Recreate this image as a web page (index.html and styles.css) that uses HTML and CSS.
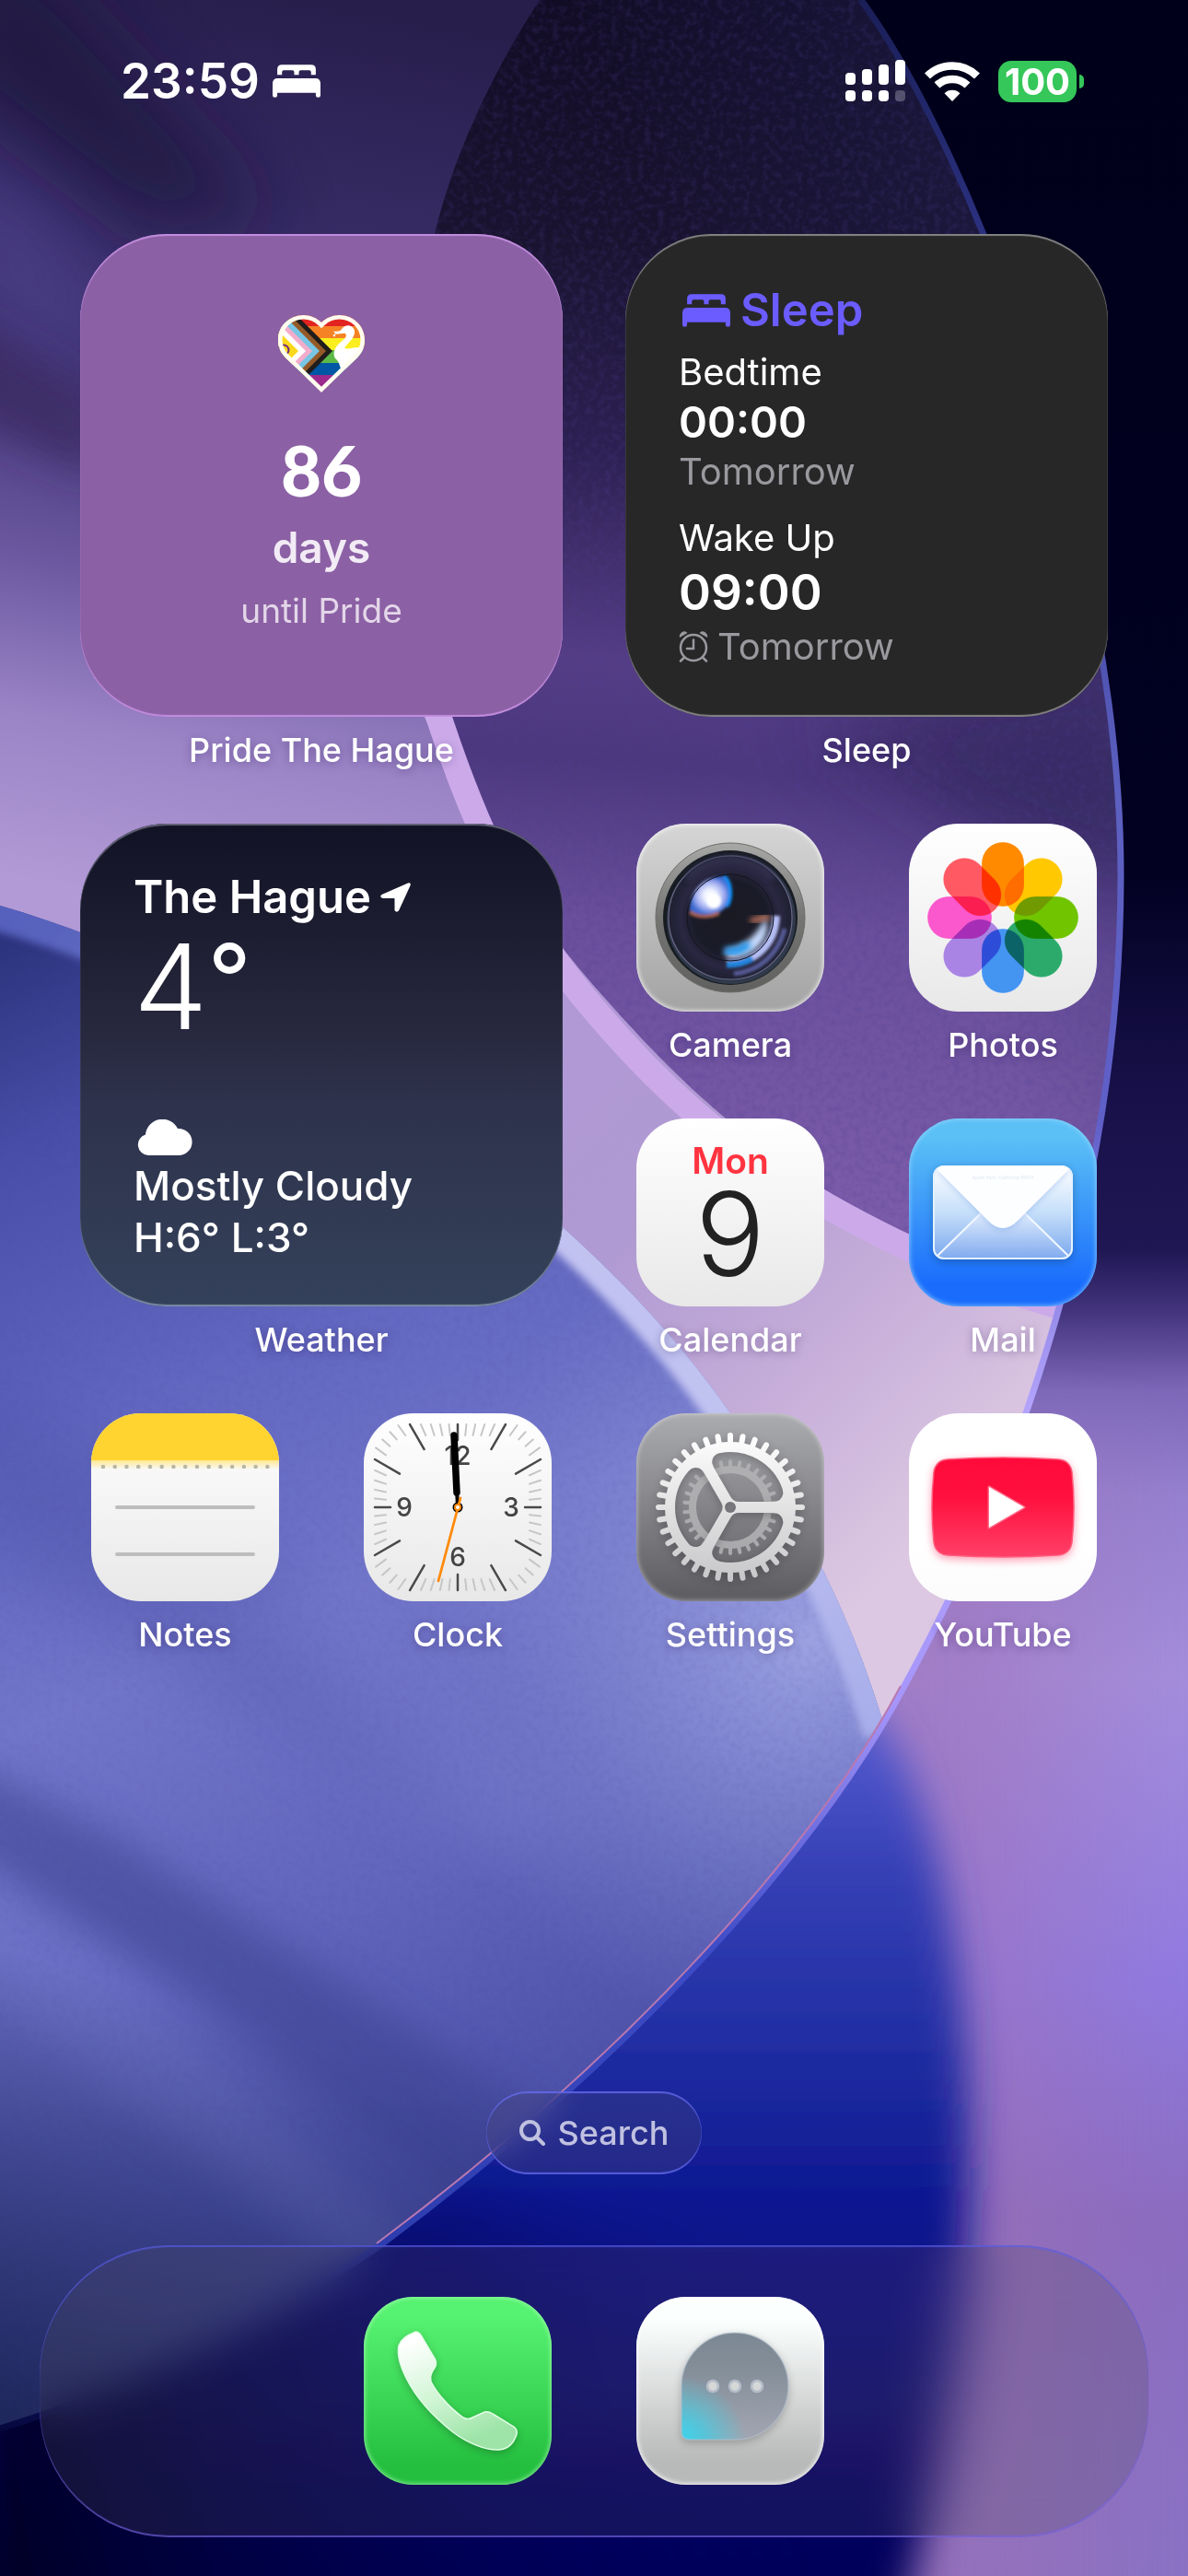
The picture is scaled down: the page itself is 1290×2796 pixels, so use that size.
FILE: index.html
```html
<!DOCTYPE html>
<html lang="en">
<head>
    <meta charset="UTF-8">
    <meta name="viewport" content="width=device-width, initial-scale=1.0">
    <title>Home Screen</title>
    <link rel="stylesheet" href="styles.css">
</head>
<body>
    <!-- Wallpaper -->
    <svg class="wallpaper" viewBox="0 0 1290 2796" preserveAspectRatio="xMidYMid slice" aria-hidden="true">
        <defs>
            <linearGradient id="right" x1="0" y1="0" x2="0" y2="1">
                <stop offset="0" stop-color="#00001a"/>
                <stop offset=".34" stop-color="#020122"/>
                <stop offset=".42" stop-color="#171048"/>
                <stop offset=".485" stop-color="#1f1753"/>
                <stop offset=".51" stop-color="#45357f"/>
                <stop offset=".54" stop-color="#7d68b8"/>
                <stop offset=".58" stop-color="#9580cf"/>
                <stop offset=".65" stop-color="#a48edc"/>
                <stop offset=".77" stop-color="#8f7ae0"/>
                <stop offset=".86" stop-color="#8a6cc0"/>
                <stop offset="1" stop-color="#8a72c4"/>
            </linearGradient>
            <linearGradient id="pinkish" x1="0" y1="0" x2="1" y2="0">
                <stop offset=".6" stop-color="#a070b4" stop-opacity=".9"/>
                <stop offset="1" stop-color="#a070b4" stop-opacity="0"/>
            </linearGradient>
            <linearGradient id="deep" gradientUnits="userSpaceOnUse" x1="0" y1="1840" x2="0" y2="2796">
                <stop offset="0" stop-color="#5a60d4"/>
                <stop offset=".2" stop-color="#3640b6"/>
                <stop offset=".42" stop-color="#1e2ba0"/>
                <stop offset=".62" stop-color="#08128c"/>
                <stop offset=".8" stop-color="#0b0872"/>
                <stop offset="1" stop-color="#000058"/>
            </linearGradient>
            <linearGradient id="corner" gradientUnits="userSpaceOnUse" x1="0" y1="2700" x2="800" y2="2500">
                <stop offset="0" stop-color="#020028"/>
                <stop offset="1" stop-color="#0c1468" stop-opacity="0"/>
            </linearGradient>
            <linearGradient id="fan" gradientUnits="userSpaceOnUse" x1="330" y1="0" x2="160" y2="980">
                <stop offset="0" stop-color="#281e4c"/>
                <stop offset=".22" stop-color="#352a62"/>
                <stop offset=".45" stop-color="#44377a"/>
                <stop offset=".65" stop-color="#6b58a0"/>
                <stop offset=".82" stop-color="#9b84c6"/>
                <stop offset="1" stop-color="#b29ad6"/>
            </linearGradient>
            <linearGradient id="mauve" gradientUnits="userSpaceOnUse" x1="500" y1="1000" x2="1080" y2="1600">
                <stop offset="0" stop-color="#b098d8"/>
                <stop offset=".45" stop-color="#b09ad2"/>
                <stop offset=".75" stop-color="#c8b0da"/>
                <stop offset="1" stop-color="#dcc8e2"/>
            </linearGradient>
            <linearGradient id="stone" gradientUnits="userSpaceOnUse" x1="900" y1="0" x2="800" y2="1400">
                <stop offset="0" stop-color="#110c24"/>
                <stop offset=".2" stop-color="#19132f"/>
                <stop offset=".36" stop-color="#2c2052"/>
                <stop offset=".52" stop-color="#553d86"/>
                <stop offset=".6" stop-color="#4c387e"/>
                <stop offset=".72" stop-color="#6a4f9c"/>
                <stop offset="1" stop-color="#8060ae"/>
            </linearGradient>
            <linearGradient id="stoneSide" gradientUnits="userSpaceOnUse" x1="740" y1="300" x2="1220" y2="100">
                <stop offset="0" stop-color="#23255c" stop-opacity="0"/>
                <stop offset="1" stop-color="#23255c" stop-opacity=".5"/>
            </linearGradient>
            <linearGradient id="blue" gradientUnits="userSpaceOnUse" x1="60" y1="1000" x2="660" y2="2400">
                <stop offset="0" stop-color="#2c347e"/>
                <stop offset=".14" stop-color="#484fa8"/>
                <stop offset=".34" stop-color="#6267c0"/>
                <stop offset=".52" stop-color="#7276ca"/>
                <stop offset=".72" stop-color="#6266bc"/>
                <stop offset="1" stop-color="#4449a0"/>
            </linearGradient>
            <radialGradient id="glow" gradientUnits="userSpaceOnUse" cx="880" cy="1780" r="440">
                <stop offset="0" stop-color="#a6ace8" stop-opacity=".85"/>
                <stop offset="1" stop-color="#8088d4" stop-opacity="0"/>
            </radialGradient>
            <linearGradient id="shade" gradientUnits="userSpaceOnUse" x1="210" y1="2180" x2="60" y2="2640">
                <stop offset="0" stop-color="#1d2760" stop-opacity="0"/>
                <stop offset="1" stop-color="#1d2658" stop-opacity=".95"/>
            </linearGradient>
            <linearGradient id="rim" gradientUnits="userSpaceOnUse" x1="0" y1="0" x2="0" y2="2640">
                <stop offset="0" stop-color="#1a1f58"/>
                <stop offset=".15" stop-color="#343a94"/>
                <stop offset=".33" stop-color="#5c60c0"/>
                <stop offset=".46" stop-color="#5f5fc8"/>
                <stop offset=".58" stop-color="#b4a4fc"/>
                <stop offset=".7" stop-color="#a696fa"/>
                <stop offset=".8" stop-color="#3f4cc8"/>
                <stop offset=".93" stop-color="#2c3cac"/>
                <stop offset="1" stop-color="#05063c"/>
            </linearGradient>
            <linearGradient id="bend" gradientUnits="userSpaceOnUse" x1="0" y1="980" x2="960" y2="1860">
                <stop offset="0" stop-color="#5560bc"/>
                <stop offset=".2" stop-color="#6670c4"/>
                <stop offset=".5" stop-color="#c2c2f2"/>
                <stop offset=".75" stop-color="#c0c2f0"/>
                <stop offset="1" stop-color="#a8aeea"/>
            </linearGradient>
            <filter id="soft" x="-20%" y="-20%" width="140%" height="140%"><feGaussianBlur stdDeviation="22"/></filter>
            <filter id="softer" x="-50%" y="-50%" width="200%" height="200%"><feGaussianBlur stdDeviation="40"/></filter>
            <filter id="edge"><feGaussianBlur stdDeviation="4"/></filter>
            <filter id="grain" x="0" y="0" width="100%" height="100%">
                <feTurbulence type="fractalNoise" baseFrequency=".14" numOctaves="3" seed="4"/>
                <feColorMatrix values="0 0 0 0 .08  0 0 0 0 .05  0 0 0 0 .3  0 0 0 1.4 -.58"/>
            </filter>
            <clipPath id="sheet">
                <path d="M0 0H935C1060 170 1217 600 1217 950C1217 1250 1130 1560 982 1830C898 1988 710 2215 413 2437C300 2515 150 2590 0 2636Z"/>
            </clipPath>
            <clipPath id="stoneClip">
                <path d="M586 0C540 70 495 160 473 250C450 340 440 440 445 530C450 640 466 730 488 778C540 940 590 1010 660 1087C760 1200 850 1275 987 1342C1060 1380 1110 1400 1220 1425V0Z"/>
            </clipPath>
            <clipPath id="blueClip">
                <path d="M0 983C200 1040 440 1180 611 1332C720 1430 780 1510 830 1590C890 1690 930 1770 962 1880V2700H0Z"/>
            </clipPath>
        </defs>
        <rect width="1290" height="2796" fill="url(#right)"/>
        <rect x="640" y="1560" width="650" height="1350" fill="url(#pinkish)" filter="url(#softer)" opacity=".6"/>
        <path d="M800 1760L936 1850C995 1900 1030 2030 1046 2200C1070 2450 1030 2650 978 2850H-60V2300Z" fill="url(#deep)" filter="url(#soft)"/>
        <path d="M-20 2560L500 2380L900 2450V2850H-20Z" fill="url(#corner)" filter="url(#soft)"/>
        <g clip-path="url(#sheet)">
            <rect width="1290" height="2796" fill="url(#mauve)"/>
            <path d="M0 0H640V800L560 1150L0 1050Z" fill="url(#fan)"/>
            <path d="M-60 140L60 230L120 330L60 420L-60 300Z" fill="#4b4088" opacity=".7" filter="url(#softer)"/>
            <path d="M-60 -60L40 -40L300 240L160 250L-60 80Z" fill="#1f163c" opacity=".75" filter="url(#softer)"/>
            <path d="M-60 330L110 430V520L-60 440Z" fill="#3b2b62" opacity=".8" filter="url(#soft)"/>
            <g clip-path="url(#stoneClip)">
                <rect width="1290" height="1430" fill="url(#stone)"/>
                <rect width="1290" height="1430" fill="url(#stoneSide)"/>
                <path d="M880 780L1260 700V980L1060 900Z" fill="#32255c" opacity=".65" filter="url(#softer)"/>
                <rect x="440" width="790" height="1430" filter="url(#grain)" opacity=".4"/>
            </g>
            <path d="M456 700C462 740 470 765 477 780C530 940 580 1020 647 1098C752 1222 850 1290 987 1355C1060 1390 1110 1408 1200 1432" fill="none" stroke="#ccaaea" stroke-width="28"/>
            <g clip-path="url(#blueClip)">
                <rect width="1290" height="2700" fill="url(#blue)"/>
                <path d="M-60 1900L120 1990L640 2330L560 2440L200 2160L-60 2000Z" fill="#373c8c" opacity=".5" filter="url(#soft)"/>
                <path d="M-60 2000L120 2130L480 2470L420 2500L160 2300L-60 2130Z" fill="#787dd0" opacity=".35" filter="url(#soft)"/>
                <path d="M-60 1480L240 1640L560 2000L300 1860L-60 1660Z" fill="#454ba0" opacity=".35" filter="url(#softer)"/>
                <path d="M200 1700L420 1760L640 2000L480 2000Z" fill="#8488d8" opacity=".3" filter="url(#softer)"/>
                <rect width="1290" height="2700" fill="url(#glow)"/>
                <rect width="1290" height="2700" fill="url(#shade)"/>
                <rect y="980" width="1000" height="1700" filter="url(#grain)" opacity=".14"/>
                <path d="M-10 983C200 1040 440 1180 611 1332C720 1430 780 1510 830 1590C890 1690 930 1770 962 1880" fill="none" stroke="url(#bend)" stroke-width="50" filter="url(#edge)"/>
            </g>
        </g>
        <path d="M935 0C1060 170 1217 600 1217 950C1217 1250 1130 1560 982 1830C898 1988 710 2215 413 2437C300 2515 150 2590 0 2636" fill="none" stroke="url(#rim)" stroke-width="7"/>
        <path d="M978 1830C894 1988 706 2213 409 2435" fill="none" stroke="#b878b0" stroke-width="2"/>
    </svg>

    <header class="status-bar">
        <div class="status-left">
            <time class="clock-time">23:59</time>
            <svg class="bed-icon" viewBox="0 0 51 35" aria-hidden="true">
                <path d="M5 11V5q0-5 5-5H41q5 0 5 5V11H41V8q0-2-2-2H30q-2 0-2 2v3h-5v-3q0-2-2-2H12q-2 0-2 2v3ZM0 20q0-5.500 5.500-5.500H45.500q5.500 0 5.500 5.500V33q0 2-2.500 2t-2.500-2V30H5V33q0 2-2.500 2T0 33Z"/>
            </svg>
        </div>
        <div class="status-right">
            <svg class="signal" viewBox="0 0 66 46" aria-hidden="true">
                <g fill="#fff">
                    <rect x="0" y="14" width="11" height="13" rx="4"/>
                    <rect x="18" y="10" width="11" height="17" rx="4"/>
                    <rect x="36" y="5" width="11" height="22" rx="4"/>
                    <rect x="54" y="0" width="11" height="27" rx="4"/>
                    <rect x="0" y="33" width="11" height="12" rx="4"/>
                    <rect x="18" y="33" width="11" height="12" rx="4"/>
                    <rect x="36" y="33" width="11" height="12" rx="4"/>
                    <rect x="54" y="33" width="11" height="12" rx="4" opacity=".25"/>
                </g>
            </svg>
            <svg class="wifi" viewBox="0 0 60 43" aria-hidden="true">
                <g fill="none" stroke="#fff" stroke-width="8.500">
                    <path d="M3 15.500A38.500 38.500 0 0 1 57 15.500"/>
                    <path d="M13.500 25.500A24 24 0 0 1 46.500 25.500"/>
                </g>
                <path d="M30 43L21.500 34.200A12.500 12.500 0 0 1 38.500 34.200Z" fill="#fff"/>
            </svg>
            <div class="battery">100</div>
        </div>
    </header>

    <main class="home">
        <section class="widget-cell">
            <div class="widget pride">
                <svg class="heart" viewBox="0 0 94 84" aria-hidden="true">
                    <defs>
                        <clipPath id="heartClip"><path d="M47 8C42 3 35 0 27.500 0C12 0 0 12 0 27C0 36 4 43 11 49L47 84L83 49C90 43 94 36 94 27C94 12 82 0 66.500 0C59 0 52 3 47 8Z"/></clipPath>
                    </defs>
                    <g clip-path="url(#heartClip)">
                        <rect width="94" height="13" fill="#e22420"/>
                        <rect y="12" width="94" height="13" fill="#f58224"/>
                        <rect y="25" width="94" height="13" fill="#fbee1f"/>
                        <rect y="38" width="94" height="14" fill="#5db947"/>
                        <rect y="52" width="94" height="13" fill="#0057a5"/>
                        <rect y="65" width="94" height="20" fill="#9c2a8c"/>
                        <path d="M-1-21L59 39L-1 99Z" fill="#201d1c"/>
                        <path d="M-8-21L52 39L-8 99Z" fill="#945a28"/>
                        <path d="M-15-21L45 39L-15 99Z" fill="#78c5e4"/>
                        <path d="M-23-21L37 39L-23 99Z" fill="#f3adcb"/>
                        <path d="M-30-21L30 39L-30 99Z" fill="#fff"/>
                        <path d="M-38-21L22 39L-38 99Z" fill="#fbd81c"/>
                        <circle cx="6" cy="38" r="5.500" fill="none" stroke="#6a2a80" stroke-width="2"/>
                        <path d="M60 17.500C64 18 68 18 70 14C74 9 82 11 83 17C84 25 76 29 72 36C79 38 82 33 94 36V50L70 60C66 57 68 52 62 47C59 42 61 36 66 31C71 27 76 23 73 20C70 19 66 21 62 20.500C63 24 60 24 59.500 22L62 20Z" fill="#fff"/>
                        <path d="M47 8C42 3 35 0 27.500 0C12 0 0 12 0 27C0 36 4 43 11 49L47 84L83 49C90 43 94 36 94 27C94 12 82 0 66.500 0C59 0 52 3 47 8Z" fill="none" stroke="#fffdf0" stroke-width="9"/>
                    </g>
                </svg>
                <p class="pride-count">86</p>
                <p class="pride-unit">days</p>
                <p class="pride-note">until Pride</p>
            </div>
            <span class="label">Pride The Hague</span>
        </section>

        <section class="widget-cell">
            <div class="widget sleep">
                <h2 class="sleep-title">
                    <svg class="bed-icon" viewBox="0 0 51 35" aria-hidden="true">
                        <path d="M5 11V5q0-5 5-5H41q5 0 5 5V11H41V8q0-2-2-2H30q-2 0-2 2v3h-5v-3q0-2-2-2H12q-2 0-2 2v3ZM0 20q0-5.500 5.500-5.500H45.500q5.500 0 5.500 5.500V33q0 2-2.500 2t-2.500-2V30H5V33q0 2-2.500 2T0 33Z"/>
                    </svg>
                    Sleep
                </h2>
                <p class="sleep-name">Bedtime</p>
                <p class="sleep-time">00:00</p>
                <p class="sleep-day">Tomorrow</p>
                <p class="sleep-name wake">Wake Up</p>
                <p class="sleep-time big">09:00</p>
                <p class="sleep-day">
                    <svg class="alarm" viewBox="0 0 32 34" aria-hidden="true">
                        <g fill="none" stroke="currentColor" stroke-width="2.500" stroke-linecap="round">
                            <circle cx="16" cy="18" r="14"/>
                            <path d="M16 9.500V19H9M5.500 29L2 32.500M26.500 29L30 32.500"/>
                        </g>
                        <path d="M1 7Q0 4 3 1.500Q7-1 9.500 2ZM31 7Q32 4 29 1.500Q25-1 22.500 2Z" fill="currentColor"/>
                    </svg>
                    Tomorrow
                </p>
            </div>
            <span class="label">Sleep</span>
        </section>

        <section class="widget-cell">
            <div class="widget weather">
                <h2 class="weather-city">
                    The Hague
                    <svg class="arrow" viewBox="0 0 33 32" aria-hidden="true"><path d="M30 .4Q33.500-.6 32.600 3L20 30.500Q17.500 33 15.500 30V17.500Q15.500 17 15 17H2.500Q-1.500 15.500 1.500 13Z"/></svg>
                </h2>
                <p class="weather-temp">4<span class="degree">°</span></p>
                <svg class="cloud" viewBox="0 0 60 39" aria-hidden="true"><path d="M12 39A11.500 11.500 0 0 1 9 16.500A18.500 18.500 0 0 1 44 10A14.500 14.500 0 0 1 46 39Z"/></svg>
                <p class="weather-text">Mostly Cloudy</p>
                <p class="weather-text">H:6° L:3°</p>
            </div>
            <span class="label">Weather</span>
        </section>

        <a class="app" href="#camera">
            <svg class="icon camera" viewBox="0 0 204 204" aria-hidden="true">
                <defs>
                    <linearGradient id="lensRing" x1="0" y1="0" x2="0" y2="1"><stop offset="0" stop-color="#a8a8a6"/><stop offset=".5" stop-color="#757573"/><stop offset="1" stop-color="#60605f"/></linearGradient>
                    <radialGradient id="lens" cx=".5" cy=".5" r=".5"><stop offset="0" stop-color="#191a22"/><stop offset=".6" stop-color="#1a1b28"/><stop offset=".8" stop-color="#2a2742"/><stop offset="1" stop-color="#1e2030"/></radialGradient>
                    <radialGradient id="spark"><stop offset="0" stop-color="#fff"/><stop offset=".3" stop-color="#eef2ff"/><stop offset=".7" stop-color="#a0acf0"/><stop offset="1" stop-color="#3c6ad0"/></radialGradient>
                    <filter id="b3" x="-40%" y="-40%" width="180%" height="180%"><feGaussianBlur stdDeviation="3"/></filter>
                    <filter id="b2" x="-40%" y="-40%" width="180%" height="180%"><feGaussianBlur stdDeviation="1.500"/></filter>
                </defs>
                <circle cx="102" cy="102" r="81" fill="url(#lensRing)" stroke="#6b6b69" stroke-width="1"/>
                <circle cx="102" cy="102" r="73" fill="#171c22"/>
                <circle cx="103" cy="104" r="70" fill="#30394a"/>
                <circle cx="102" cy="102" r="67" fill="url(#lens)" stroke="#6a6888" stroke-width="1.200"/>
                <g filter="url(#b2)">
                    <path d="M58 94C58 72 72 57 96 57C103 66 104 82 98 90C90 100 70 102 58 94Z" fill="url(#spark)"/>
                    <path d="M95 57C104 64 104 82 98 90" fill="none" stroke="#0c8cf4" stroke-width="4"/>
                    <path d="M58 96C66 102 80 102 90 97" fill="none" stroke="#a8604c" stroke-width="4"/>
                </g>
                <path d="M97 136C118 134 134 118 140 101C149 124 128 148 98 146Z" fill="#c8dcff" filter="url(#b3)"/>
                <path d="M96 138C106 140 116 137 122 130" stroke="#1890ea" stroke-width="8" fill="none" filter="url(#b3)"/>
                <path d="M124 106C132 104 138 101 145 101" stroke="#c87860" stroke-width="6" fill="none" filter="url(#b3)"/>
                <g fill="none" filter="url(#b2)">
                    <path d="M98 152C130 152 151 130 152 100" stroke="#b4bef4" stroke-width="8"/>
                    <path d="M98 153C108 153 118 151 126 146" stroke="#2484dc" stroke-width="7"/>
                    <path d="M106 163C134 160 154 142 161 114" stroke="#565c98" stroke-width="5"/>
                </g>
                <circle cx="84" cy="84" r="8" fill="#fff" filter="url(#b2)"/>
                <circle cx="102" cy="102" r="47" fill="none" stroke="#14141f" stroke-width="1"/>
                <path d="M55 60A63 63 0 0 1 149 60" fill="none" stroke="#393656" stroke-width="10" opacity=".7" filter="url(#b3)"/>
            </svg>
            <span class="label">Camera</span>
        </a>

        <a class="app" href="#photos">
            <svg class="icon photos" viewBox="-102 -102 204 204" aria-hidden="true">
                <g class="petals">
                    <rect x="-23" y="-82" width="46" height="70" rx="23" fill="#ff8a00"/>
                    <rect x="-23" y="-82" width="46" height="70" rx="23" fill="#ffc800" transform="rotate(45)"/>
                    <rect x="-23" y="-82" width="46" height="70" rx="23" fill="#70c400" transform="rotate(90)"/>
                    <rect x="-23" y="-82" width="46" height="70" rx="23" fill="#2caa6c" transform="rotate(135)"/>
                    <rect x="-23" y="-82" width="46" height="70" rx="23" fill="#4494f2" transform="rotate(180)"/>
                    <rect x="-23" y="-82" width="46" height="70" rx="23" fill="#a984e4" transform="rotate(225)"/>
                    <rect x="-23" y="-82" width="46" height="70" rx="23" fill="#fa58cc" transform="rotate(270)"/>
                    <rect x="-23" y="-82" width="46" height="70" rx="23" fill="#ff5964" transform="rotate(315)"/>
                </g>
            </svg>
            <span class="label">Photos</span>
        </a>

        <a class="app" href="#calendar">
            <span class="icon calendar">
                <span class="cal-day">Mon</span>
                <span class="cal-date">9</span>
            </span>
            <span class="label">Calendar</span>
        </a>

        <a class="app" href="#mail">
            <svg class="icon mail" viewBox="0 0 204 204" aria-hidden="true">
                <defs>
                    <linearGradient id="env" x1="0" y1="0" x2="0" y2="1"><stop offset="0" stop-color="#fff"/><stop offset=".5" stop-color="#c6dffa"/><stop offset="1" stop-color="#78a6ee"/></linearGradient>
                    <linearGradient id="envLow" x1="0" y1="0" x2="0" y2="1"><stop offset="0" stop-color="#e0ecfc"/><stop offset="1" stop-color="#7ea9ef"/></linearGradient>
                </defs>
                <rect x="26" y="51" width="152" height="102" rx="12" fill="url(#env)" class="drop"/>
                <path d="M31 150L78 103H126L173 150Q170 153 164 153H40Q34 153 31 150Z" fill="url(#envLow)"/>
                <path d="M31 149L78 103M173 149L126 103" stroke="#f2f8ff" stroke-width="2"/>
                <rect x="27" y="52" width="150" height="100" rx="11" fill="none" stroke="#e4f2ff" stroke-width="2"/>
                <path d="M30 55Q34 51 40 51H164Q170 51 174 55L118 111Q102 127 86 111Z" fill="#fdfeff" class="flap"/>
                <text x="102" y="66" class="mail-text">Apple Park, California 95014</text>
            </svg>
            <span class="label">Mail</span>
        </a>

        <a class="app" href="#notes">
            <svg class="icon notes" viewBox="0 0 204 204" aria-hidden="true">
                <defs>
                    <linearGradient id="noteFade" x1="0" y1="0" x2="0" y2="1"><stop offset="0" stop-color="#ffe890"/><stop offset="1" stop-color="#ffe890" stop-opacity="0"/></linearGradient>
                </defs>
                <rect width="204" height="51" fill="#ffd430"/>
                <rect y="51" width="204" height="10" fill="url(#noteFade)"/>
                <path d="M13 58H192" stroke="#b9b7a4" stroke-width="4.600" stroke-linecap="round" stroke-dasharray="0 12.740"/>
                <path d="M28 102H176M28 153H176" stroke="#bdbdbd" stroke-width="4" stroke-linecap="round"/>
            </svg>
            <span class="label">Notes</span>
        </a>

        <a class="app" href="#clock">
            <svg class="icon clock" viewBox="-102 -102 204 204" aria-hidden="true">
                <g id="ticks"></g>
                <g class="clock-digits">
                    <text x="0" y="-46">12</text>
                    <text x="58" y="10">3</text>
                    <text x="0" y="64">6</text>
                    <text x="-58" y="10">9</text>
                </g>
                <path d="M0 0L-1-20" stroke="#000" stroke-width="4"/>
                <path d="M-1-16L-4-78" stroke="#000" stroke-width="7.500" stroke-linecap="round"/>
                <circle r="5.500"/>
                <path d="M3-10L-21 80" stroke="#ff8a0a" stroke-width="2.800" stroke-linecap="round"/>
                <circle r="3" fill="#fff" stroke="#ff8a0a" stroke-width="2"/>
            </svg>
            <span class="label">Clock</span>
        </a>

        <a class="app" href="#settings">
            <svg class="icon settings" viewBox="-102 -102 204 204" aria-hidden="true">
                <defs>
                    <linearGradient id="gearFill" gradientUnits="userSpaceOnUse" x1="0" y1="-82" x2="0" y2="82"><stop offset="0" stop-color="#fff"/><stop offset="1" stop-color="#c6c6c8"/></linearGradient>
                    <mask id="gearMask" maskUnits="userSpaceOnUse" x="-102" y="-102" width="204" height="204">
                        <circle r="71" fill="#fff"/>
                        <g id="bigTeeth" stroke="#fff" stroke-width="6" stroke-linecap="round"></g>
                        <g id="holes" stroke="#000" stroke-width="20" stroke-linejoin="round">
                            <path d="M9.200 16L47.400 16A50 50 0 0 1-9.800 49Z"/>
                            <path d="M9.200 16L47.400 16A50 50 0 0 1-9.800 49Z" transform="rotate(120)"/>
                            <path d="M9.200 16L47.400 16A50 50 0 0 1-9.800 49Z" transform="rotate(240)"/>
                        </g>
                        <circle r="6"/>
                    </mask>
                </defs>
                <g stroke="#b4b4b7" opacity=".85" fill="none">
                    <circle r="41" stroke-width="8"/>
                    <g id="smallTeeth" stroke-width="4" stroke-linecap="round"></g>
                </g>
                <g class="drop">
                    <rect x="-102" y="-102" width="204" height="204" fill="url(#gearFill)" mask="url(#gearMask)"/>
                </g>
            </svg>
            <span class="label">Settings</span>
        </a>

        <a class="app" href="#youtube">
            <svg class="icon youtube" viewBox="0 0 204 204" aria-hidden="true">
                <defs>
                    <linearGradient id="yt" x1="0" y1="0" x2="0" y2="1"><stop offset="0" stop-color="#ff0a3a"/><stop offset=".4" stop-color="#ff103e"/><stop offset="1" stop-color="#ff4068"/></linearGradient>
                </defs>
                <path class="yt-glow" d="M42 50Q102 46 162 50Q175 51 177 64Q181 102 177 140Q175 153 162 154Q102 158 42 154Q29 153 27 140Q23 102 27 64Q29 51 42 50Z" fill="url(#yt)" stroke="#ff5c7c" stroke-width="1.500"/>
                <path d="M87 80L125 102L87 124Z" fill="#fff" stroke="#ff6c8a" stroke-width="3" stroke-linejoin="round"/>
                <path d="M87 80L125 102L87 124Z" fill="#fff"/>
            </svg>
            <span class="label">YouTube</span>
        </a>
    </main>

    <button class="search" type="button">
        <svg class="glass" viewBox="0 0 28 28" aria-hidden="true"><circle cx="11.500" cy="11.500" r="9.500"/><path d="M18.500 18.500L26 26"/></svg>
        Search
    </button>

    <nav class="dock" aria-label="Dock">
        <a class="app" href="#phone" aria-label="Phone">
            <svg class="icon phone" viewBox="0 0 204 204" aria-hidden="true">
                <defs>
                    <linearGradient id="handset" x1="0" y1="0" x2=".4" y2="1"><stop offset=".1" stop-color="#fff"/><stop offset=".6" stop-color="#d0f5d4"/><stop offset="1" stop-color="#9ee4a8"/></linearGradient>
                </defs>
                <path class="drop" d="M54 39Q59 36 63 43L77 67Q80 72 77 77Q71 85 73 92C80 106 95 122 108 131Q113 134 118 131L129 126Q134 123 140 127L163 141Q167 144 166 149Q161 165 147 166C133 167 113 159 97 147C74 129 56 108 46 88C39 74 36 62 38 53Q41 44 54 39Z" fill="url(#handset)" stroke="#e2ffe6" stroke-width="1.500"/>
            </svg>
        </a>
        <a class="app" href="#messages" aria-label="Messages">
            <svg class="icon messages" viewBox="0 0 204 204" aria-hidden="true">
                <defs>
                    <linearGradient id="bubble" x1="0" y1="0" x2="0" y2="1"><stop offset="0" stop-color="#7c8893"/><stop offset=".3" stop-color="#828d98"/><stop offset="1" stop-color="#a2a6b2"/></linearGradient>
                    <radialGradient id="cyan" gradientUnits="userSpaceOnUse" cx="44" cy="162" r="76"><stop offset="0" stop-color="#34dcf6"/><stop offset=".4" stop-color="#4cc8de" stop-opacity=".9"/><stop offset="1" stop-color="#4cc8de" stop-opacity="0"/></radialGradient>
                </defs>
                <g class="drop">
                    <path d="M107 39A58 58 0 0 1 107 155H58Q49 155 49 146V97A58 58 0 0 1 107 39Z" fill="url(#bubble)"/>
                    <path d="M107 39A58 58 0 0 1 107 155H58Q49 155 49 146V97A58 58 0 0 1 107 39Z" fill="url(#cyan)" stroke="#b4c2d0" stroke-opacity=".6" stroke-width="1.500"/>
                </g>
                <g fill="#d6d8d8" stroke="#b4bcc8" stroke-width="2.500">
                    <circle cx="83" cy="97" r="6"/>
                    <circle cx="107" cy="97" r="6"/>
                    <circle cx="131" cy="97" r="6"/>
                </g>
            </svg>
        </a>
    </nav>

    <script src="script.js"></script>
</body>
</html>
```
FILE: styles.css
```css
* {
    box-sizing: border-box;
}

body {
    margin: 0;
    min-height: 100vh;
    display: flex;
    flex-direction: column;
    font-family: Inter, "Liberation Sans", sans-serif;
    color: white;
    background-color: #0b0872;
}

p, h2 {
    margin: 0;
}

a {
    color: inherit;
    text-decoration: none;
}

.wallpaper {
    position: fixed;
    top: 0;
    left: 0;
    width: 100%;
    height: 100%;
    z-index: -1;
}

/* Status bar */
.status-bar {
    display: flex;
    justify-content: space-between;
    align-items: center;
    height: 176px;
    padding: 0 113px 0 131px;
}

.status-left {
    display: flex;
    align-items: center;
    gap: 14px;
}

.clock-time {
    font-size: 53px;
    font-weight: 600;
    line-height: 60px;
}

.bed-icon {
    width: 52px;
    height: 36px;
    fill: currentColor;
}

.status-right {
    display: flex;
    align-items: center;
    gap: 20px;
}

.signal {
    width: 66px;
    height: 46px;
}

.wifi {
    width: 60px;
    height: 43px;
}

.battery {
    position: relative;
    width: 85px;
    height: 45px;
    margin-right: 8px;
    border-radius: 14px;
    background-color: #35c759;
    font-size: 40px;
    font-weight: 700;
    line-height: 45px;
    text-align: center;
}

.battery::after {
    content: "";
    position: absolute;
    right: -8px;
    top: 15px;
    width: 5px;
    height: 15px;
    border-radius: 0 6px 6px 0;
    background-color: #35c759;
}

/* Home grid */
.home {
    display: grid;
    grid-template-columns: repeat(4, 1fr);
    grid-auto-rows: 320px;
    padding: 78px 53px 0;
}

.widget-cell {
    grid-column: span 2;
    grid-row: span 2;
    display: flex;
    flex-direction: column;
    align-items: center;
}

.widget {
    width: 524px;
    height: 524px;
    border-radius: 94px;
    display: flex;
    flex-direction: column;
}

.label {
    margin-top: 13px;
    font-size: 36px;
    font-weight: 500;
    line-height: 46px;
    text-shadow: 0 2px 10px rgba(40, 20, 80, 0.35);
}

.app {
    display: flex;
    flex-direction: column;
    align-items: center;
}

.icon {
    width: 204px;
    height: 204px;
    border-radius: 54px;
    overflow: hidden;
    background: linear-gradient(#ffffff, #e8e8e8);
}

.drop {
    filter: drop-shadow(0 3px 4px rgba(0, 0, 0, 0.22));
}

/* Pride widget */
.pride {
    align-items: center;
    padding-top: 88px;
    background-color: #8b60a4;
    box-shadow: inset 0 2px 1px #c48ee0, inset 0 -2px 1px #c48ee0;
}

.heart {
    width: 94px;
    height: 84px;
}

.pride-count {
    margin-top: 40px;
    font-family: Lato, Inter, sans-serif;
    font-size: 76px;
    font-weight: 900;
    line-height: 88px;
}

.pride-unit {
    font-size: 46px;
    font-weight: 600;
    line-height: 60px;
    margin-top: 10px;
    color: #f2ebf5;
}

.pride-note {
    font-size: 37px;
    font-weight: 400;
    line-height: 46px;
    margin-top: 16px;
    color: #e3d6e9;
}

/* Sleep widget */
.sleep {
    padding: 53px 58px 0;
    background-color: #272728;
    box-shadow: inset 0 2px 1px #858585, inset 0 -2px 1px #858585;
}

.sleep-title {
    display: flex;
    align-items: center;
    gap: 11px;
    padding-left: 4px;
    font-size: 49px;
    font-weight: 600;
    line-height: 60px;
    color: #6b5cff;
}

.sleep-name,
.sleep-day {
    font-size: 40px;
    font-weight: 400;
    line-height: 54px;
}

.sleep-name {
    margin-top: 10px;
}

.sleep-name.wake {
    margin-top: 18px;
}

.sleep-time {
    font-size: 47px;
    font-weight: 600;
    line-height: 54px;
}

.sleep-time.big {
    font-size: 53px;
    line-height: 64px;
}

.sleep-day {
    display: flex;
    align-items: center;
    gap: 10px;
    color: #99999e;
}

.alarm {
    width: 32px;
    height: 34px;
}

/* Weather widget */
.weather {
    padding: 50px 58px 0;
    background: linear-gradient(#121225, #26263c 40%, #2e324c 58%, #34415a);
    box-shadow: inset 0 2px 1px #65657a, inset 0 -2px 1px #7c8aa4;
}

.weather-city {
    display: flex;
    align-items: center;
    gap: 10px;
    font-size: 49px;
    font-weight: 600;
    line-height: 60px;
}

.arrow {
    width: 33px;
    height: 32px;
    fill: currentColor;
}

.weather-temp {
    height: 136px;
    font-size: 128px;
    font-weight: 300;
    line-height: 134px;
}

.degree {
    font-size: 104px;
    font-weight: 400;
    line-height: 100px;
    vertical-align: 18px;
}

.cloud {
    width: 60px;
    height: 39px;
    margin: 75px 0 0 4px;
    fill: currentColor;
}

.weather-text {
    font-size: 44px;
    font-weight: 500;
    line-height: 56px;
}

.cloud + .weather-text {
    margin-top: 5px;
}

/* App icons */
.camera {
    background: linear-gradient(#d6d6d6, #a3a3a3);
    box-shadow: inset 0 0 5px 1px rgba(255, 255, 255, 0.8);
}

.petals {
    isolation: isolate;
}

.petals rect {
    mix-blend-mode: multiply;
    stroke: rgba(255, 255, 255, 0.25);
    stroke-width: 1px;
}

.calendar {
    display: flex;
    flex-direction: column;
    align-items: center;
}

.cal-day {
    margin-top: 22px;
    font-size: 39px;
    font-weight: 600;
    line-height: 48px;
    color: #ff3440;
}

.cal-date {
    font-size: 126px;
    font-weight: 300;
    line-height: 110px;
    color: #222222;
}

.mail {
    background: linear-gradient(#5bc0f6 10%, #1a6dfc 88%);
    box-shadow: inset 0 0 5px 1px rgba(160, 220, 255, 0.7);
}

.mail-text {
    font-size: 5px;
    fill: #dfe9f4;
    text-anchor: middle;
}

.flap {
    filter: drop-shadow(0 2px 3px rgba(60, 120, 220, 0.25));
}

.clock-digits {
    font-size: 28px;
    font-weight: 500;
    fill: #444444;
    text-anchor: middle;
}

.settings {
    background: linear-gradient(#abacb0, #5c5b60);
    box-shadow: inset 0 0 5px 1px rgba(255, 255, 255, 0.4);
}

.youtube {
    background: linear-gradient(#ffffff 70%, #fbfbfb);
}

.yt-glow {
    filter: drop-shadow(0 3px 5px rgba(255, 40, 90, 0.45));
}

/* Search button */
.search {
    display: flex;
    align-items: center;
    align-self: center;
    justify-content: center;
    gap: 14px;
    width: 234px;
    height: 90px;
    margin: auto 0 77px;
    padding: 0;
    border: none;
    border-radius: 45px;
    background-color: rgba(70, 70, 120, 0.35);
    backdrop-filter: blur(16px);
    box-shadow: inset 0 2px 1px rgba(110, 115, 255, 0.7), inset 0 -2px 1px rgba(110, 115, 255, 0.7);
    font-family: inherit;
    font-size: 36px;
    font-weight: 500;
    line-height: 46px;
    color: #c0c1e0;
    cursor: pointer;
}

.glass {
    width: 28px;
    height: 28px;
    fill: none;
    stroke: currentColor;
    stroke-width: 4px;
    stroke-linecap: round;
}

/* Dock */
.dock {
    display: flex;
    justify-content: center;
    gap: 92px;
    margin: 0 43px 42px;
    padding: 56px 0 57px;
    border-radius: 140px;
    background-color: rgba(80, 75, 90, 0.24);
    backdrop-filter: blur(24px);
    box-shadow: inset 0 2px 1px rgba(90, 95, 240, 0.65), inset 0 -2px 1px rgba(120, 100, 230, 0.65);
}

.phone {
    background: linear-gradient(#56f271 10%, #24bf3f 90%);
    box-shadow: inset 0 0 5px 1px rgba(180, 255, 190, 0.7);
}

.messages {
    background: linear-gradient(#fbfffe 12%, #b8b9b9 88%);
    box-shadow: inset 0 0 4px 2px rgba(255, 255, 255, 0.7);
}
```
FILE: script.js
```js
function addLine(group, angle, r1, r2) {
    const line = document.createElementNS('http://www.w3.org/2000/svg', 'line');
    line.setAttribute('x1', Math.sin(angle) * r1);
    line.setAttribute('y1', -Math.cos(angle) * r1);
    line.setAttribute('x2', Math.sin(angle) * r2);
    line.setAttribute('y2', -Math.cos(angle) * r2);
    group.appendChild(line);
    return line;
}

// Clock ticks follow the square edge of the face
const ticks = document.getElementById('ticks');
for (let i = 0; i < 60; i++) {
    const a = i * Math.PI / 30;
    const side = Math.max(Math.abs(Math.sin(a)), Math.abs(Math.cos(a)));
    const hour = i % 5 === 0;
    const outer = Math.min(90 / side, 110);
    let inner = Math.min(78 / side, 99);
    if (hour) {
        inner = i % 15 === 0 ? 73 : 63 / side;
    }
    const line = addLine(ticks, a, outer, inner);
    line.setAttribute('stroke', hour ? '#4a4a4a' : '#c6c6c6');
    line.setAttribute('stroke-width', hour ? 2.5 : 2);
    line.setAttribute('stroke-linecap', 'round');
}

// Gear teeth
for (let i = 0; i < 36; i++) {
    addLine(document.getElementById('bigTeeth'), i * Math.PI / 18, 66, 78);
}
for (let i = 0; i < 30; i++) {
    addLine(document.getElementById('smallTeeth'), i * Math.PI / 15, 42, 50);
}
```
